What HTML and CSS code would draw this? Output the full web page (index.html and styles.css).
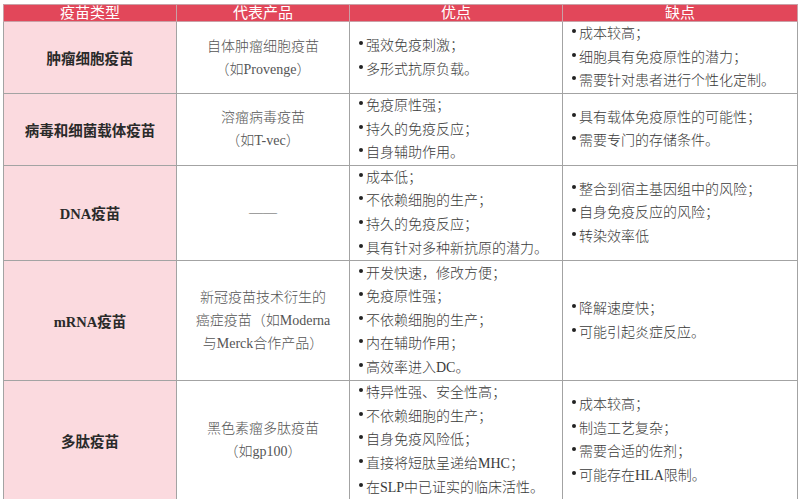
FILE: index.html
```html
<!DOCTYPE html>
<html lang="zh">
<head>
<meta charset="utf-8">
<link rel="stylesheet" href="styles.css">
</head>
<body>
<table class="vt">
  <colgroup>
    <col class="c1"><col class="c2"><col class="c3"><col class="c4">
  </colgroup>
  <thead>
    <tr class="hd"><th>疫苗类型</th><th>代表产品</th><th>优点</th><th>缺点</th></tr>
  </thead>
  <tbody>
    <tr class="r1">
      <td class="type">肿瘤细胞疫苗</td>
      <td class="prod">自体肿瘤细胞疫苗<br>（如Provenge）</td>
      <td class="list"><ul><li>强效免疫刺激；</li><li>多形式抗原负载。</li></ul></td>
      <td class="list"><ul><li>成本较高；</li><li>细胞具有免疫原性的潜力；</li><li>需要针对患者进行个性化定制。</li></ul></td>
    </tr>
    <tr class="r2">
      <td class="type">病毒和细菌载体疫苗</td>
      <td class="prod">溶瘤病毒疫苗<br>（如T-vec）</td>
      <td class="list"><ul><li>免疫原性强；</li><li>持久的免疫反应；</li><li>自身辅助作用。</li></ul></td>
      <td class="list"><ul><li>具有载体免疫原性的可能性；</li><li>需要专门的存储条件。</li></ul></td>
    </tr>
    <tr class="r3">
      <td class="type">DNA疫苗</td>
      <td class="prod">——</td>
      <td class="list"><ul><li>成本低；</li><li>不依赖细胞的生产；</li><li>持久的免疫反应；</li><li>具有针对多种新抗原的潜力。</li></ul></td>
      <td class="list"><ul><li>整合到宿主基因组中的风险；</li><li>自身免疫反应的风险；</li><li>转染效率低</li></ul></td>
    </tr>
    <tr class="r4">
      <td class="type">mRNA疫苗</td>
      <td class="prod">新冠疫苗技术衍生的<br>癌症疫苗（如Moderna<br>与Merck合作产品）</td>
      <td class="list"><ul><li>开发快速，修改方便；</li><li>免疫原性强；</li><li>不依赖细胞的生产；</li><li>内在辅助作用；</li><li>高效率进入DC。</li></ul></td>
      <td class="list"><ul><li>降解速度快；</li><li>可能引起炎症反应。</li></ul></td>
    </tr>
    <tr class="r5">
      <td class="type">多肽疫苗</td>
      <td class="prod">黑色素瘤多肽疫苗<br>（如gp100）</td>
      <td class="list"><ul><li>特异性强、安全性高；</li><li>不依赖细胞的生产；</li><li>自身免疫风险低；</li><li>直接将短肽呈递给MHC；</li><li>在SLP中已证实的临床活性。</li></ul></td>
      <td class="list"><ul><li>成本较高；</li><li>制造工艺复杂；</li><li>需要合适的佐剂；</li><li>可能存在HLA限制。</li></ul></td>
    </tr>
  </tbody>
</table>
</body>
</html>
```

FILE: styles.css
```css
html, body {
  margin: 0;
  padding: 0;
  background: #ffffff;
}
body {
  padding: 4px 0 0 3px;
  font-family: "Liberation Serif", "Noto Sans CJK SC", serif;
  color: #333333;
}
.vt {
  border-collapse: collapse;
  table-layout: fixed;
  width: 794px;
}
.c1 { width: 173px; }
.c2 { width: 173px; }
.c3 { width: 213px; }
.c4 { width: 235px; }
.vt th, .vt td {
  border: 1px solid #a3a3a3;
  padding: 0;
  vertical-align: middle;
}
.vt .hd th {
  background: #e2475a;
  color: #ffffff;
  font-weight: 400;
  font-size: 15px;
  height: 16px;
  line-height: 16px;
  text-align: center;
  border-color: #c9a0a6;
}
.r1 td { height: 71px; }
.r2 td { height: 70px; }
.r3 td { height: 93px; }
.r4 td { height: 119px; }
.r5 td { height: 117px; }
.type {
  background: #fbdadf;
  text-align: center;
  font-size: 14.5px;
  font-weight: 700;
  color: #2a2a2a;
}
.prod {
  text-align: center;
  font-size: 14px;
  line-height: 23px;
  color: #555555;
  font-weight: 300;
}
.vt td.list {
  padding-left: 9px;
}
.list ul {
  list-style: none;
  margin: 0;
  padding: 0;
}
.list li {
  font-size: 14px;
  line-height: 23.6px;
  color: #3a3a3a;
  font-weight: 300;
  white-space: nowrap;
}
.list li::before {
  content: "";
  display: inline-block;
  width: 4px;
  height: 4px;
  border-radius: 50%;
  background: #222222;
  margin-right: 3px;
  vertical-align: 5px;
}
```
